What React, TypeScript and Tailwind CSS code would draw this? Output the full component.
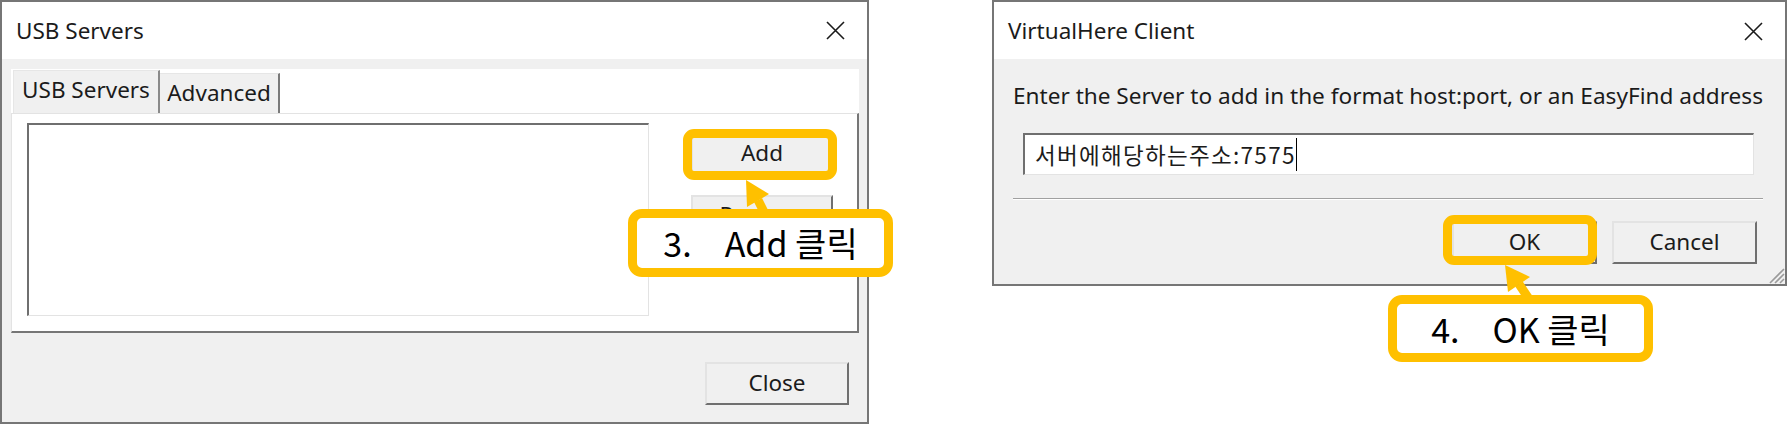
import * as React from "react";

// ─── Win32-ish dialog pieces ─────────────────────────────────────────────────

function CloseGlyph() {
  return (
    <svg width="19" height="19" viewBox="0 0 19 19" className="shrink-0">
      <path d="M1 1 L18 18 M18 1 L1 18" stroke="#1a1a1a" strokeWidth="1.6" fill="none" />
    </svg>
  );
}

function TitleBar({ title, xRight }: { title: string; xRight: string }) {
  return (
    <div className="flex items-center justify-between h-[57px] bg-white pl-[14px]">
      <span className="text-[22.5px] leading-[30px] text-[#1b1b1b]">{title}</span>
      <div className={xRight}>
        <CloseGlyph />
      </div>
    </div>
  );
}

function WinButton({ label, className }: { label: string; className?: string }) {
  return (
    <div
      className={
        "flex items-center justify-center bg-[#f0f0f0] border-2 border-t-[#e3e3e3] border-l-[#e3e3e3] border-r-[#6f6f6f] border-b-[#6f6f6f] text-[22.5px] leading-none text-[#1b1b1b] " +
        (className ?? "")
      }
    >
      {label}
    </div>
  );
}

// ─── Left: USB Servers ───────────────────────────────────────────────────────

function UsbServersDialog() {
  return (
    <div className="w-[869px] h-[424px] border-2 border-[#767676] flex flex-col shrink-0">
      <TitleBar title="USB Servers" xRight="mr-[22px] -mt-[1px]" />
      <div className="flex-1 bg-[#f0f0f0] pl-[9px] pr-[8px] pt-[10px] flex flex-col">
        {/* tab strip */}
        <div className="h-[44px] bg-white flex items-end pl-[2px]">
          <div className="w-[147px] h-[43px] pb-[4px] bg-[#f0f0f0] border-l border-t border-[#e6e6e6] border-r-2 border-r-[#8a8a8a] flex items-center justify-center text-[22.5px] leading-[30px] text-[#1b1b1b]">
            USB Servers
          </div>
          <div className="w-[120px] h-[40px] pb-[2px] bg-[#f0f0f0] border-t border-[#e6e6e6] border-r-2 border-r-[#7a7a7a] flex items-center justify-center text-[22.5px] leading-[30px] text-[#1b1b1b]">
            Advanced
          </div>
        </div>
        {/* tab panel */}
        <div className="h-[220px] bg-white border-t border-l border-[#e3e3e3] border-r-2 border-b-2 border-r-[#767676] border-b-[#767676] flex items-start pl-[15px] pt-[9px]">
          <div className="w-[622px] h-[193px] bg-white border-t-2 border-l-2 border-[#6f6f6f] border-r border-b border-r-[#e3e3e3] border-b-[#e3e3e3]" />
          <div className="ml-[42px] mt-[10px] flex flex-col gap-[22px]">
            <WinButton label="Add" className="w-[142px] h-[40px]" />
            <WinButton label="Remove" className="w-[142px] h-[40px]" />
          </div>
        </div>
        <div className="flex justify-end pr-[10px] mt-[29px]">
          <WinButton label="Close" className="w-[144px] h-[43px]" />
        </div>
      </div>
    </div>
  );
}

// ─── Right: VirtualHere Client ───────────────────────────────────────────────

function ResizeGrip() {
  return (
    <svg width="18" height="18" viewBox="0 0 18 18" className="absolute right-0 bottom-0">
      <path d="M17 3 L3 17 M17 8 L8 17 M17 13 L13 17" stroke="#9a9a9a" strokeWidth="1.6" fill="none" />
    </svg>
  );
}

function VirtualHereDialog() {
  return (
    <div className="relative ml-[123px] w-[795px] h-[286px] border-2 border-[#767676] flex flex-col shrink-0">
      <TitleBar title="VirtualHere Client" xRight="mr-[22px] mt-[1px]" />
      <div className="flex-1 bg-[#f0f0f0] flex flex-col">
        <p className="pl-[19px] pt-[22px] text-[22.6px] leading-[30px] text-[#1b1b1b] whitespace-nowrap">
          Enter the Server to add in the format host:port, or an EasyFind address
        </p>
        <div className="ml-[29px] mt-[22px] w-[731px] h-[42px] bg-white border-t-2 border-l-2 border-[#6f6f6f] border-r border-b border-r-[#e3e3e3] border-b-[#e3e3e3] flex items-center pl-[10px]">
          <span className="font-['Noto_Sans_CJK_KR',sans-serif] text-[22.5px] leading-none tracking-[1.3px] text-[#1b1b1b]">
            서버에해당하는주소:7575
          </span>
          <span className="w-[1.5px] h-[33px] bg-black" />
        </div>
        <div className="ml-[19px] mt-[23px] w-[750px] border-t border-t-[#a0a0a0] border-b border-b-white" />
        <div className="flex justify-end gap-[15px] pr-[28px] mt-[21px]">
          <WinButton label="OK" className="w-[145px] h-[43px]" />
          <WinButton label="Cancel" className="w-[145px] h-[43px]" />
        </div>
      </div>
      <ResizeGrip />
    </div>
  );
}

// ─── Annotations (overlay) ───────────────────────────────────────────────────

function Callout({ num, text, className }: { num: string; text: string; className: string }) {
  return (
    <div
      className={
        "absolute bg-white border-[9px] border-[#ffc000] rounded-[14px] flex items-center justify-center font-['Noto_Sans_CJK_KR',sans-serif] text-[34px] leading-none text-black " +
        className
      }
    >
      <span>{num}</span>
      <span className="ml-[33px]">{text}</span>
    </div>
  );
}

export default function App() {
  return (
    <div className="relative w-[1787px] h-[426px] bg-white flex items-start overflow-hidden font-['Noto_Sans','Noto_Sans_CJK_KR',sans-serif]">
      <UsbServersDialog />
      <VirtualHereDialog />

      {/* highlight frames */}
      <div className="absolute left-[683px] top-[129px] w-[154px] h-[51px] border-[9px] border-[#ffc000] rounded-[11px]" />
      <div className="absolute left-[1443px] top-[215px] w-[154px] h-[50px] border-[9px] border-[#ffc000] rounded-[11px]" />

      {/* arrows */}
      <svg className="absolute inset-0 pointer-events-none" width="1787" height="426" viewBox="0 0 1787 426">
        <path d="M758 200 L765 214" stroke="#ffc000" strokeWidth="9" fill="none" />
        <polygon points="746,180 769,194 747,207" fill="#ffc000" />
        <path d="M1519 284 L1529 299" stroke="#ffc000" strokeWidth="9" fill="none" />
        <polygon points="1505,265 1530,277 1508,292" fill="#ffc000" />
      </svg>

      <Callout num="3." text="Add 클릭" className="left-[628px] top-[209px] w-[265px] h-[68px]" />
      <Callout num="4." text="OK 클릭" className="left-[1388px] top-[295px] w-[265px] h-[67px]" />
    </div>
  );
}
